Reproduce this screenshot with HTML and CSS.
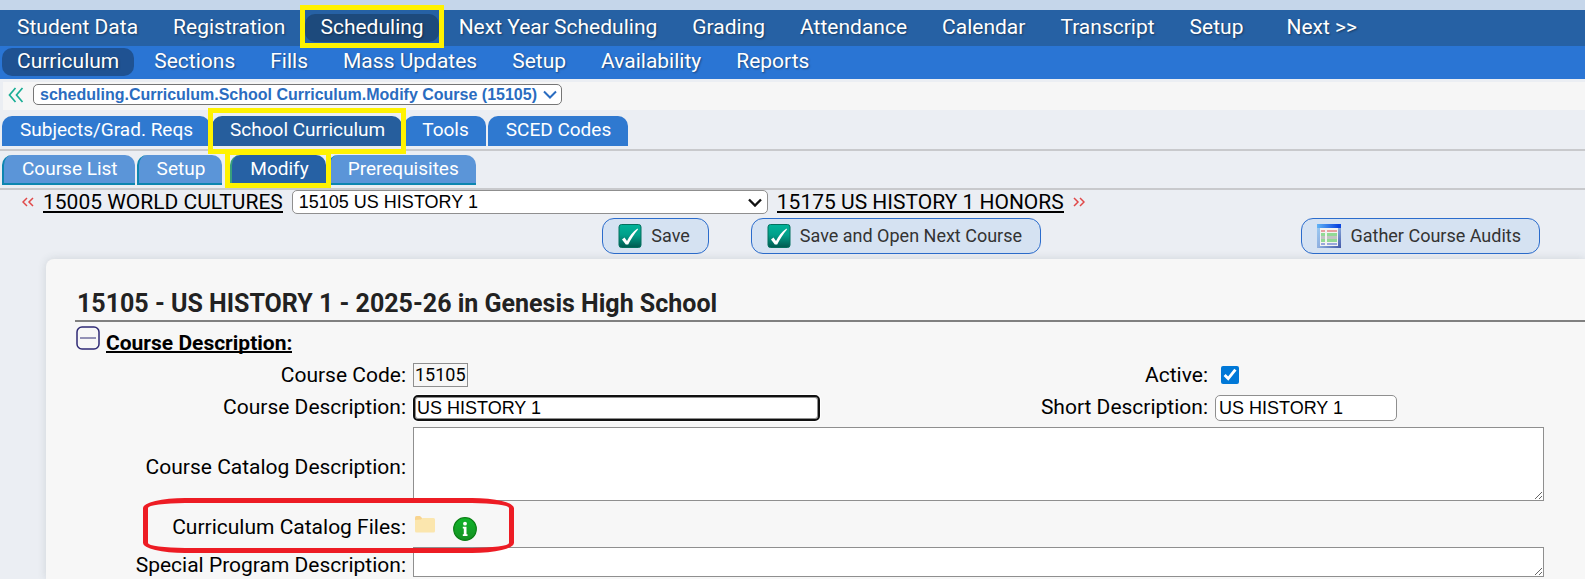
FILE: index.html
```html
<!DOCTYPE html>
<html lang="en">
<head>
<meta charset="utf-8">
<meta name="viewport" content="width=device-width, initial-scale=1">
<title>Modify Course</title>
<link rel="stylesheet" href="styles.css">
</head>
<body>
<svg class="defs" width="0" height="0" aria-hidden="true">
  <defs>
    <linearGradient id="teal" x1="0" y1="0" x2="0" y2="1"><stop offset="0" stop-color="#00b39a"/><stop offset=".45" stop-color="#00a08a"/><stop offset="1" stop-color="#00594f"/></linearGradient>
    <linearGradient id="winbar" x1="0" y1="0" x2="1" y2="0"><stop offset="0" stop-color="#62b4f5"/><stop offset=".9" stop-color="#0a45e0"/></linearGradient>
    <linearGradient id="winframe" x1="0" y1="0" x2="1" y2="1"><stop offset="0" stop-color="#9ccdf4"/><stop offset=".5" stop-color="#8fb0e0"/><stop offset="1" stop-color="#4258a8"/></linearGradient>
    <linearGradient id="green" x1="0" y1="0" x2="0" y2="1"><stop offset="0" stop-color="#0fb52a"/><stop offset="1" stop-color="#159022"/></linearGradient>
    <symbol id="check" viewBox="0 0 24 24"><rect x="1" y="0.500" width="22" height="23" rx="2.500" fill="url(#teal)" stroke="#04705f"/><path d="M4 15.500 6.500 13.500 9 17C11.500 12 14.500 8 19.500 4.500L20 5.500C16 10 13 15 10.200 20.500H7.800Z" fill="#fff"/></symbol>
  </defs>
</svg>
<nav class="bar bar-main" aria-label="Modules">
  <a href="#">Student Data</a>
  <a href="#">Registration</a>
  <a href="#" class="active marked" aria-current="true">Scheduling</a>
  <a href="#">Next Year Scheduling</a>
  <a href="#">Grading</a>
  <a href="#">Attendance</a>
  <a href="#">Calendar</a>
  <a href="#">Transcript</a>
  <a href="#">Setup</a>
  <a href="#" class="more">Next &gt;&gt;</a>
</nav>
<nav class="bar bar-sub" aria-label="Scheduling">
  <a href="#" class="active" aria-current="true">Curriculum</a>
  <a href="#">Sections</a>
  <a href="#">Fills</a>
  <a href="#">Mass Updates</a>
  <a href="#">Setup</a>
  <a href="#">Availability</a>
  <a href="#">Reports</a>
</nav>
<div class="crumbs">
  <a href="#" class="crumb-back" aria-label="Back"><svg width="16" height="16" viewBox="0 0 16 16" fill="none" stroke="#1aae96" stroke-width="1.700"><path d="M7.500 1 1.500 8l6 7M14.500 1l-6 7 6 7"/></svg></a>
  <span class="select-wrap crumb-wrap">
    <select class="crumb-select" aria-label="Recent screens"><option>scheduling.Curriculum.School Curriculum.Modify Course (15105)</option></select>
    <svg class="caret" width="14" height="9" viewBox="0 0 14 9" fill="none" stroke="#2a6cc0" stroke-width="2"><path d="m1 1.500 6 6 6-6"/></svg>
  </span>
</div>
<nav class="tabs" aria-label="Curriculum">
  <a href="#">Subjects/Grad. Reqs</a>
  <a href="#" class="active marked" aria-current="true">School Curriculum</a>
  <a href="#">Tools</a>
  <a href="#">SCED Codes</a>
</nav>
<nav class="tabs tabs-inner" aria-label="School Curriculum">
  <a href="#">Course List</a>
  <a href="#">Setup</a>
  <a href="#" class="active marked" aria-current="page">Modify</a>
  <a href="#">Prerequisites</a>
</nav>
<div class="pager">
  <svg width="12" height="10" viewBox="0 0 12 10" fill="none" stroke="#e04848" stroke-width="1.500"><path d="M5 1 1 5l4 4M11 1 7 5l4 4"/></svg>
  <a href="#">15005 WORLD CULTURES</a>
  <span class="select-wrap course-wrap">
    <select class="course-select" aria-label="Course"><option>15105 US HISTORY 1</option></select>
    <svg class="caret" width="14" height="9" viewBox="0 0 14 9" fill="none" stroke="#111" stroke-width="2.400"><path d="m1 1.500 6 6 6-6"/></svg>
  </span>
  <a href="#">15175 US HISTORY 1 HONORS</a>
  <svg width="12" height="10" viewBox="0 0 12 10" fill="none" stroke="#e04848" stroke-width="1.500"><path d="m1 1 4 4-4 4M7 1l4 4-4 4"/></svg>
</div>
<div class="actions">
  <button type="button"><svg width="24" height="24"><use href="#check"/></svg>Save</button>
  <button type="button"><svg width="24" height="24"><use href="#check"/></svg>Save and Open Next Course</button>
  <button type="button" class="audits"><svg width="24" height="24" viewBox="0 0 24 24"><path fill="url(#winframe)" d="M0 0h24v24H0z"/><path fill="url(#winbar)" d="M0 0h24v4H0z"/><path fill="#f3f3f1" d="M3 4h18v18H3z"/><path fill="#e7a0a0" d="M4 6h16v2H4z"/><path fill="#93da95" d="M4 9h16v3H4zM4 15h16v3H4z"/><path fill="#c4c4c4" d="M4 12h16v3H4z"/><path fill="#9aa8dc" d="M4 19h16v2H4z"/><path fill="#f3f3f1" d="M8 4h2v18H8z"/></svg>Gather Course Audits</button>
</div>
<main class="card">
  <h1>15105 - US HISTORY 1 - 2025-26 in Genesis High School</h1>
  <div class="section">
    <button type="button" class="toggle" aria-label="Collapse"><svg width="24" height="24" viewBox="0 0 24 24" fill="none" stroke="#2f2a75"><rect x="1" y="1" width="22" height="22" rx="5" stroke-width="1.500"/><path d="M4 12h16"/></svg></button>
    <h2>Course Description:</h2>
  </div>
  <form class="form">
    <span class="label">Course Code:</span>
    <div><span class="code">15105</span></div>
    <label for="active">Active:</label>
    <div class="check-cell"><input type="checkbox" id="active" checked></div>

    <label for="desc">Course Description:</label>
    <div class="text-cell"><input type="text" class="desc" id="desc" value="US HISTORY 1"></div>
    <label for="short">Short Description:</label>
    <div class="text-cell"><input type="text" class="short" id="short" value="US HISTORY 1"></div>

    <label class="low" for="catalog">Course Catalog Description:</label>
    <textarea class="wide tall" id="catalog"></textarea>

    <span class="label low files-label">Curriculum Catalog Files:</span>
    <div class="files wide">
      <button type="button" class="icon-button" aria-label="Open files"><svg width="20" height="17" viewBox="0 0 20 17"><path fill="#f8d48f" d="M0 1.500Q0 0 1.500 0H5l2 2v5H0z"/><path fill="#fbe6ae" d="M0 4 6 3.500 7.500 2H18.500Q20 2 20 3.500V15Q20 16.500 18.500 16.500h-17Q0 16.500 0 15z"/></svg></button>
      <button type="button" class="icon-button info" aria-label="Information"><svg width="24" height="24" viewBox="0 0 24 24"><circle cx="12" cy="12" r="11.300" fill="url(#green)" stroke="#0a7f14" stroke-width="1.200"/><g fill="#fff"><circle cx="12" cy="6.700" r="1.900"/><path d="M9.800 9.800h3.700v7.400h1v1.800H9.800v-1.800h1v-5.600h-1z"/></g></svg></button>
    </div>

    <label class="low" for="special">Special Program Description:</label>
    <textarea class="wide" id="special"></textarea>
  </form>
</main>
</body>
</html>
```
FILE: styles.css
```css
* { box-sizing: border-box; }

body {
  margin: 0;
  padding-top: 10px;
  min-height: 100vh;
  background: linear-gradient(#c5d6ea 10px, #ebeef3 10px);
  color: #000;
  font-family: Roboto, "Liberation Sans", sans-serif;
  font-size: 21px;
  overflow: hidden;
  display: flex;
  flex-direction: column;
}

a { color: inherit; text-decoration: none; white-space: nowrap; }
input, select, textarea { font-family: "Liberation Sans", Arial, sans-serif; font-size: 18px; color: #000; }
button { font-family: inherit; cursor: pointer; }
.defs { position: absolute; }

/* Module bars */
.bar { display: flex; gap: 5px; padding: 0 2px; color: #fff; }
.bar a {
  height: 28px;
  padding: 0 15px;
  border-radius: 10px;
  line-height: 26px;
  text-shadow: 1px 1px 2px rgba(0, 0, 0, .4);
}
.bar-main { background: #2661a4; padding-top: 4px; padding-bottom: 4px; }
.bar-sub { background: #2a75d4; padding-top: 2px; padding-bottom: 3px; }
.bar-main .active { background: #1d4a7c; }
.bar-sub .active { background: #1f5292; }
.bar .more { margin-left: 8px; }

/* Highlight frames */
.marked { position: relative; }
.marked::after {
  content: "";
  position: absolute;
  z-index: 1;
  inset: -9px -5px -6px;
  border: 5px solid #fff200;
  pointer-events: none;
}

/* Recent screens */
.crumbs {
  display: flex;
  align-items: center;
  gap: 9px;
  height: 28px;
  margin: 3px 0 6px 3px;
  padding: 0 0 3px 5px;
  background: #f6f6f6;
}
.crumb-back { display: flex; }
.select-wrap { position: relative; display: flex; }
.select-wrap select {
  appearance: none;
  width: 100%;
  background: #fff;
  border: 1px solid #767676;
  border-radius: 5px;
}
.caret { position: absolute; top: 6px; pointer-events: none; }
.crumb-wrap { width: 529px; }
.crumb-wrap .caret { right: 5px; }
.select-wrap .crumb-select { height: 21px; padding: 0 24px 0 6px; color: #2a6cc0; font-size: 16px; font-weight: 700; }

/* Tabs */
.tabs {
  display: flex;
  gap: 2px;
  padding: 0 2px 3px;
  border-bottom: 2px solid #c8c9cc;
  color: #fff;
  font-size: 19px;
}
.tabs a {
  height: 30px;
  padding: 0 17px 0 18px;
  border-radius: 10px 10px 0 0;
  background: #2f79d0;
  line-height: 27px;
}
.tabs .active { background: #265e9d; }
.tabs .marked::after { inset: -8px -4px -8px; }
.tabs-inner { padding-top: 4px; }
.tabs-inner a {
  background: #5b95d8;
  border-left: 2px solid #0d86b0;
  border-bottom: 2px solid #0d86b0;
}
.tabs-inner .active { margin-left: 6px; background: #2661a4; border-left-color: #38a07c; border-bottom-color: #2661a4; }
.tabs-inner .marked::after { inset: -5px -5px -5px -7px; }

/* Previous / next course */
.pager { display: flex; align-items: center; gap: 9px; height: 24px; padding-left: 22px; }
.pager a { line-height: 23px; border-bottom: 2px solid #000; height: 22px; }
.course-wrap { width: 476px; }
.select-wrap .course-select { height: 24px; padding: 0 24px 0 6px; border-color: #8f8f8f; }
.course-wrap .caret { right: 6px; top: 8px; }

/* Actions */
.actions { display: flex; gap: 42px; padding: 4px 45px 5px 38%; }
.actions button {
  display: flex;
  align-items: center;
  gap: 9px;
  height: 36px;
  padding: 0 18px 0 15px;
  border: 1px solid #2b6ccc;
  border-radius: 12px;
  background: #d5e2f2;
  color: #333;
  font-size: 18px;
  line-height: 20px;
  white-space: nowrap;
}
.actions .audits { margin-left: auto; }

/* Course card */
.card {
  flex: 1 0 auto;
  margin-left: 46px;
  padding: 28px 0 2px 29px;
  border-radius: 8px 0 0 0;
  background: #f7f7f7;
  box-shadow: 0 0 8px rgba(60, 80, 90, .16);
}
h1 {
  margin: 0;
  padding: 1px 2px 0;
  border-bottom: 2px solid #808080;
  color: #222;
  font-size: 25px;
  line-height: 32px;
}
.section { display: flex; gap: 6px; height: 41px; padding-top: 4px; }
.toggle, .icon-button { display: flex; padding: 0; border: 0; background: none; }
.toggle { height: 24px; margin-left: 1px; }
h2 { margin: 5px 0 0; height: 22px; border-bottom: 2px solid #000; font-size: 21px; line-height: 24px; }

.form {
  display: grid;
  grid-template-columns: 331px 1fr auto 329px;
  grid-template-rows: 24px 28px 74px 34px 30px;
  column-gap: 7px;
  row-gap: 6px;
  align-items: center;
  padding-right: 41px;
}
.form label, .label { text-align: right; white-space: nowrap; line-height: 24px; }
.form .low { padding-top: 6px; }
.form div { display: flex; }
.wide { grid-column: 2 / -1; }
.code { height: 24px; padding: 0 1px; border: 1px solid #8f8f8f; line-height: 22px; font-size: 18px; }
.form .check-cell { padding-left: 6px; }
.text-cell { align-self: end; }
input[type="checkbox"] { width: 18px; height: 18px; margin: 0; accent-color: #0078d7; }
input[type="text"] { height: 26px; padding: 0 3px; border: 1px solid #8f8f8f; border-radius: 5px; background: #fff; }
.form .desc { width: 407px; padding: 0 2px; border: 2px solid #101010; box-shadow: 0 0 0 1px #fff, inset 0 0 0 1px #8f8f8f; }
.form .short { width: 182px; }
textarea { display: block; width: 100%; height: 30px; margin: 0; border: 1px solid #8f8f8f; border-radius: 0; background: #fff; resize: both; }
textarea.tall { height: 74px; }
.form .files { gap: 18px; padding: 8px 0 0 2px; align-items: flex-start; }
.info { padding-top: 1px; }
.files-label { position: relative; }

/* Red callout round the catalog files row */
.files-label::after {
  content: "";
  position: absolute;
  z-index: 1;
  inset: -11px -108px -14px 68px;
  border: 5px solid #ed1c24;
  border-radius: 42px / 10px;
  pointer-events: none;
}
```
